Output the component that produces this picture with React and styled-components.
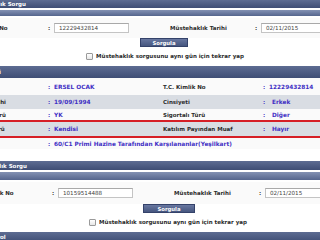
import React from 'react';
import styled, { createGlobalStyle } from 'styled-components';

const GlobalStyle = createGlobalStyle`
  html, body {
    margin: 0;
    padding: 0;
    background: #ffffff;
  }
  body {
    font-family: "DejaVu Sans", Verdana, sans-serif;
    font-size: 5.5px;
    color: #2a2a2a;
  }
`;

const Page = styled.div`
  width: 320px;
  height: 240px;
  overflow: hidden;
  background: #fff;
`;

// the page is wider than the shot, so the label column starts off-screen
const Sheet = styled.div`
  width: 440px;
  margin-left: ${(p) => p.$shift}px;
  display: flex;
  flex-direction: column;
`;

const TitleBar = styled.div`
  height: ${(p) => p.$h}px;
  margin-top: ${(p) => p.$mt || 0}px;
  display: flex;
  align-items: center;
  padding-left: ${(p) => p.$pl || 0}px;
  background: linear-gradient(#5d6c92, #3f4e75);
  color: #fff;
  font-weight: bold;
  font-size: 5.5px;
  white-space: nowrap;
`;

const TitleText = styled.span`
  margin-left: ${(p) => p.$ml || 0}px;
`;

const SubBar = styled.div`
  height: ${(p) => p.$h}px;
  margin-top: 2px;
  background: linear-gradient(#8391b3, #55658d);
`;

const Grid = styled.div`
  display: grid;
  grid-template-columns: ${(p) => p.$ll || 83}px 6px 106px ${(p) => p.$rl || 100}px 6px 1fr;
  align-items: center;
  height: ${(p) => p.$h}px;
  margin-top: ${(p) => p.$mt || 0}px;
  background: ${(p) => (p.$alt ? '#d9dde3' : '#fafafa')};
  white-space: nowrap;
`;

const Label = styled.div`
  font-weight: bold;
  color: #2c2c2c;
  padding-left: ${(p) => p.$pl || 0}px;
  overflow: hidden;
`;

const Colon = styled.div`
  font-weight: bold;
  color: ${(p) => (p.$blue ? '#3f2fc4' : '#333')};
`;

const Value = styled.div`
  font-weight: bold;
  font-size: 5.8px;
  color: #3f2fc4;
  padding-left: ${(p) => p.$pl || 0}px;
`;

const Input = styled.div`
  width: ${(p) => p.$w}px;
  height: 10px;
  box-sizing: border-box;
  border: 1px solid #c4c4c4;
  border-top-color: #a9a9a9;
  background: #fff;
  display: flex;
  align-items: center;
  padding-left: 4px;
  color: #444;
  font-size: 5.6px;
`;

const ButtonRow = styled.div`
  height: ${(p) => p.$h}px;
  display: flex;
  align-items: flex-start;
  padding-left: ${(p) => p.$pl}px;
`;

const Button = styled.div`
  width: ${(p) => p.$w}px;
  height: 9px;
  box-sizing: border-box;
  border: 1px solid #34426a;
  background: linear-gradient(#6877a0, #46567f);
  color: #fff;
  font-weight: bold;
  font-size: 5.3px;
  display: flex;
  align-items: center;
  justify-content: center;
`;

const CheckRow = styled.div`
  height: 10px;
  margin-top: ${(p) => p.$mt}px;
  display: flex;
  align-items: center;
  gap: 3px;
  padding-left: ${(p) => p.$pl}px;
  font-weight: bold;
  color: #2a2a2a;
  white-space: nowrap;
`;

const Box = styled.span`
  width: 5px;
  height: 5px;
  border: 1px solid #9a9a9a;
  border-radius: 1px;
  background: linear-gradient(#ffffff, #e6e6e6);
`;

const Marked = styled.div`
  border-top: 2px solid #d61f26;
  border-bottom: 2px solid #d61f26;
`;

const Gap = styled.div`
  height: ${(p) => p.$h}px;
`;

const QuerySection = ({ tc, shift, ll, titleMl, bar, sub, rowH, btnPl, btnW, chkPl }) => (
  <Sheet $shift={shift}>
    <TitleBar $h={bar}>
      <TitleText $ml={titleMl}>Müstehaklık Sorgu</TitleText>
    </TitleBar>
    <SubBar $h={sub} />
    <Grid $h={rowH} $mt={2} $ll={ll} $rl={95}>
      <Label>T.C. Kimlik No</Label>
      <Colon>:</Colon>
      <Input $w={75}>{tc}</Input>
      <Label $pl={10}>Müstehaklık Tarihi</Label>
      <Colon>:</Colon>
      <Input $w={110}>02/11/2015</Input>
    </Grid>
    <ButtonRow $h={10} $pl={btnPl}>
      <Button $w={btnW}>Sorgula</Button>
    </ButtonRow>
    <CheckRow $mt={3} $pl={chkPl}>
      <Box />
      <span>Müstehaklık sorgusunu aynı gün için tekrar yap</span>
    </CheckRow>
  </Sheet>
);

const rows = [
  { h: 17, l: 'Adı Soyadı', v: 'ERSEL OCAK', rl: 'T.C. Kimlik No', rv: '12229432814' },
  { h: 14, alt: true, l: 'Doğum Tarihi', v: '19/09/1994', rl: 'Cinsiyeti', rv: ' Erkek' },
  { h: 11, l: 'Başvuru Türü', v: 'YK', rl: 'Sigortalı Türü', rv: ' Diğer' },
];

const DataRow = ({ r }) => (
  <Grid $h={r.h} $alt={r.alt} $rl={103}>
    <Label>{r.l}</Label>
    <Colon $blue>:</Colon>
    <Value>{r.v}</Value>
    <Label $pl={3}>{r.rl}</Label>
    <Colon $blue>:</Colon>
    <Value $pl={r.rv.startsWith(' ') ? 3 : 0}>{r.rv.trim()}</Value>
  </Grid>
);

const App = () => (
  <Page>
    <GlobalStyle />
    <QuerySection
      tc="12229432814"
      shift={-35}
      ll={83}
      titleMl={3}
      bar={8}
      sub={6}
      rowH={20}
      btnPl={175}
      btnW={48}
      chkPl={121}
    />
    <Sheet $shift={-35}>
      <TitleBar $h={12} $mt={5}>
        <TitleText $ml={-3}>Hasta Bilgisi</TitleText>
      </TitleBar>
      {rows.map((r) => (
        <DataRow key={r.l} r={r} />
      ))}
      <Marked>
        <DataRow r={{ h: 14, alt: true, l: 'Yakınlık Türü', v: 'Kendisi', rl: 'Katılım Payından Muaf', rv: ' Hayır' }} />
      </Marked>
      <Grid $h={11}>
        <Label>Kapsam</Label>
        <Colon $blue>:</Colon>
        <Value>60/C1 Primi Hazine Tarafından Karşılananlar(Yeşilkart)</Value>
      </Grid>
      <Gap $h={12} />
    </Sheet>
    <QuerySection
      tc="10159514488"
      shift={-29}
      ll={81}
      titleMl={-2}
      bar={9}
      sub={8}
      rowH={22}
      btnPl={172}
      btnW={52}
      chkPl={118}
    />
    <Sheet $shift={-31}>
      <TitleBar $h={10} $mt={5} $pl={1}>İlaç Kontrol</TitleBar>
    </Sheet>
  </Page>
);

export default App;
